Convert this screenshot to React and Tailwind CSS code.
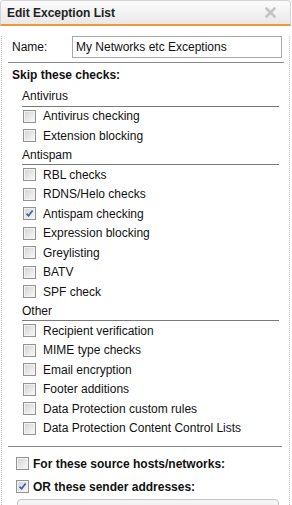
import React from 'react';

const Check = ({ checked }) => (
  <span className="relative block w-[13px] h-[13px] shrink-0 border border-[#939393] bg-linear-to-br from-[#d2d2d2] to-[#fafafa] shadow-[inset_0_0_0_1px_#f2f2f2]">
    {checked && (
      <svg className="absolute left-[1px] top-[1px]" width="9" height="9" viewBox="0 0 9 9">
        <path d="M1.5 4.6 L3.6 6.8 L7.6 1.6" fill="none" stroke="#3d5fae" strokeWidth="1.7" />
      </svg>
    )}
  </span>
);

const Header = ({ label }) => (
  <div className="h-[19.5px] ml-[14px] mr-[5px] flex items-center border-b border-[#7a7a7a] box-border">
    {label}
  </div>
);

const Row = ({ label, checked }) => (
  <div className="h-[19.5px] ml-[15px] flex items-center gap-[7px]">
    <Check checked={checked} />
    <span>{label}</span>
  </div>
);

const groups = [
  { name: 'Antivirus', items: ['Antivirus checking', 'Extension blocking'] },
  {
    name: 'Antispam',
    items: ['RBL checks', 'RDNS/Helo checks', 'Antispam checking', 'Expression blocking', 'Greylisting', 'BATV', 'SPF check'],
  },
  {
    name: 'Other',
    items: [
      'Recipient verification',
      'MIME type checks',
      'Email encryption',
      'Footer additions',
      'Data Protection custom rules',
      'Data Protection Content Control Lists',
    ],
  },
];

export default function App() {
  return (
    <div className="w-[292px] h-[505px] overflow-hidden bg-white text-[12px] leading-[14px] text-[#111] font-['Liberation_Sans',Arial,sans-serif]">
      {/* title bar */}
      <div className="w-[291px] h-[26px] rounded-t-[4px] border border-b-0 border-[#d4d4d4] bg-linear-to-b from-[#fcfcfc] to-[#e8e8e8] flex items-center justify-between pl-[6px] pr-[14px] border-b-2 border-b-[#e99a36] box-border">
        <span className="font-bold text-[#222]">Edit Exception List</span>
        <svg width="11" height="11" viewBox="0 0 11 11">
          <path d="M1.5 1.5 L9.5 9.5 M9.5 1.5 L1.5 9.5" stroke="#c4c4c4" strokeWidth="2.6" strokeLinecap="round" />
        </svg>
      </div>

      <div className="ml-px w-[289px] h-[479px] border-x border-dotted border-[#bdbdbd] pl-[6px] pr-[5px] box-border">
        {/* name */}
        <div className="mt-[10px] flex items-center h-[22px]">
          <span className="ml-[4px] w-[60px]">Name:</span>
          <div className="flex-1 h-[22px] mr-[2px] border border-[#a9a9a9] flex items-center pl-[3px] text-[#111]">
            My Networks etc Exceptions
          </div>
        </div>
        <div className="mt-[4px] border-t border-[#8a8a8a]" />

        <div className="h-[24px] flex items-center pl-[4px] font-bold">Skip these checks:</div>

        {groups.map((g) => (
          <div key={g.name}>
            <Header label={g.name} />
            {g.items.map((it) => (
              <Row key={it} label={it} checked={it === 'Antispam checking'} />
            ))}
          </div>
        ))}

        <div className="mt-[8px] mr-[2px] border-t border-[#8a8a8a]" />

        <div className="mt-[5px] h-[23px] flex items-center gap-[4px] pl-[8px] font-bold">
          <Check />
          <span>For these source hosts/networks:</span>
        </div>
        <div className="h-[23px] flex items-center gap-[4px] pl-[8px] font-bold">
          <Check checked />
          <span>OR these sender addresses:</span>
        </div>
        <div className="mt-[1px] ml-[9px] mr-[5px] h-[20px] rounded-t-[4px] border border-[#c6c6c6] bg-linear-to-b from-[#f6f6f6] to-[#e9e9e9]" />
      </div>
    </div>
  );
}
